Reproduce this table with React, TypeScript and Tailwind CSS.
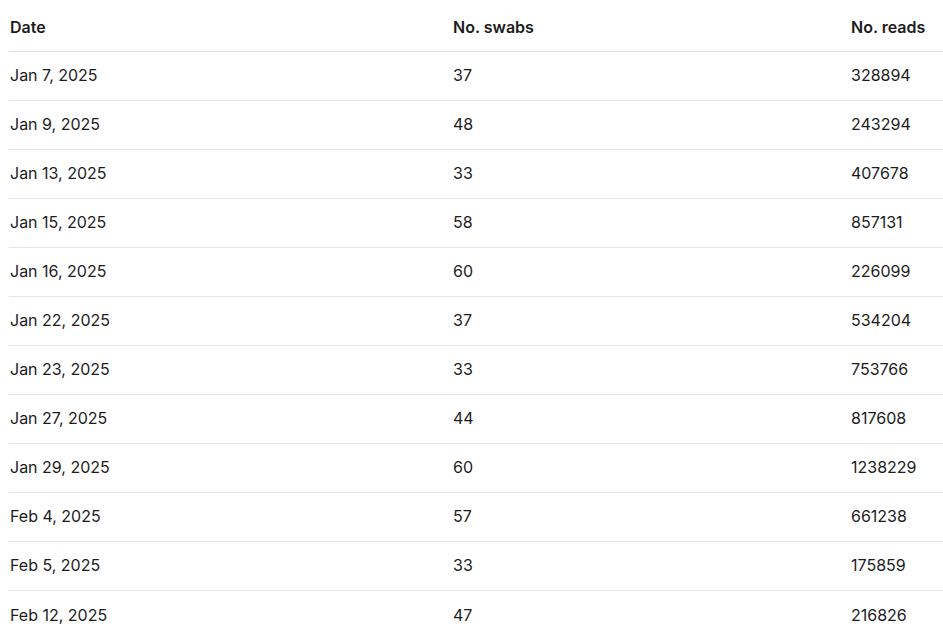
import React from "react";

const rows: [string, string, string][] = [
  ["Jan 7, 2025", "37", "328894"],
  ["Jan 9, 2025", "48", "243294"],
  ["Jan 13, 2025", "33", "407678"],
  ["Jan 15, 2025", "58", "857131"],
  ["Jan 16, 2025", "60", "226099"],
  ["Jan 22, 2025", "37", "534204"],
  ["Jan 23, 2025", "33", "753766"],
  ["Jan 27, 2025", "44", "817608"],
  ["Jan 29, 2025", "60", "1238229"],
  ["Feb 4, 2025", "57", "661238"],
  ["Feb 5, 2025", "33", "175859"],
  ["Feb 12, 2025", "47", "216826"],
];

export default function App() {
  return (
    <div
      className="min-h-[643px] bg-white pl-[9px] text-[#1c1c1c] overflow-hidden"
      style={{ fontFamily: "Inter, 'Noto Sans', sans-serif" }}
    >
      <div className="grid grid-cols-[444px_398px_1fr] h-[52px] items-center border-b border-[#dedede] text-[16px] font-semibold pt-[3px]">
        <div className="pl-px">Date</div>
        <div>No. swabs</div>
        <div>No. reads</div>
      </div>
      {rows.map((r, i) => (
        <div
          key={i}
          className="grid grid-cols-[444px_398px_1fr] h-[49px] items-center border-b border-[#e6e6e6] last:border-b-0 text-[16px] pb-[2px]"
        >
          <div className="pl-px">{r[0]}</div>
          <div>{r[1]}</div>
          <div>{r[2]}</div>
        </div>
      ))}
    </div>
  );
}
